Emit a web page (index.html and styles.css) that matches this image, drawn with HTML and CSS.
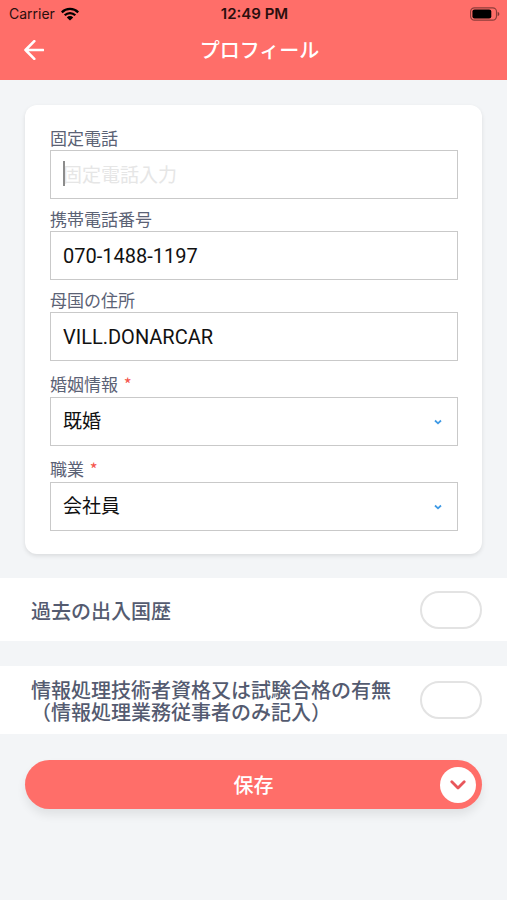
FILE: index.html
```html
<!DOCTYPE html>
<html lang="ja">
<head>
<meta charset="utf-8">
<meta name="viewport" content="width=device-width, initial-scale=1">
<title>プロフィール</title>
<link rel="stylesheet" href="styles.css">
</head>
<body>
<header class="header">
  <div class="status">
    <div class="status-left">
      <span>Carrier</span>
      <svg class="wifi" viewBox="0 0 18 14" aria-hidden="true">
        <path d="M0 4.6A12.7 12.7 0 0 1 18 4.6L16.4 6.2A10.4 10.4 0 0 0 1.6 6.2Z"/>
        <path d="M2.9 7.5A8.6 8.6 0 0 1 15.1 7.5L13.5 9.1A6.4 6.4 0 0 0 4.5 9.1Z"/>
        <path d="M5.8 10.4A4.6 4.6 0 0 1 12.2 10.4L9 13.6Z"/>
      </svg>
    </div>
    <span class="clock">12:49 PM</span>
    <div class="status-right">
      <svg class="battery" viewBox="0 0 31 14" aria-hidden="true">
        <rect x=".6" y=".6" width="26.8" height="12.8" rx="4" fill="none" stroke="#000" stroke-opacity=".45" stroke-width="1.2"/>
        <rect x="2.5" y="2.3" width="19.5" height="9.4" rx="2.2"/>
        <path d="M28.6 4.6Q30.4 5.4 30.4 7T28.6 9.4Z" fill-opacity=".5"/>
      </svg>
    </div>
  </div>
  <nav class="navbar">
    <button class="back" type="button" aria-label="戻る">
      <svg viewBox="0 0 20 20" aria-hidden="true"><path d="M10.3 1.2L1.5 10L10.3 18.8M1.5 10H19.2"/></svg>
    </button>
    <h1 class="title">プロフィール</h1>
  </nav>
</header>
<main>
  <form>
    <section class="card">
      <div class="field">
        <label for="tel">固定電話</label>
        <div class="box"><input id="tel" type="tel" placeholder="固定電話入力"><span class="caret"></span></div>
      </div>
      <div class="field">
        <label for="mobile">携帯電話番号</label>
        <div class="box"><input id="mobile" type="tel" value="070-1488-1197"></div>
      </div>
      <div class="field">
        <label for="address">母国の住所</label>
        <div class="box"><input id="address" type="text" value="VILL.DONARCAR"></div>
      </div>
      <div class="field required">
        <label for="marital">婚姻情報 <span class="mark">*</span></label>
        <div class="box">
          <select id="marital"><option>既婚</option></select>
          <svg class="arrow" viewBox="0 0 8 6" aria-hidden="true"><path d="M1 1.5L4 4.3L7 1.5"/></svg>
        </div>
      </div>
      <div class="field required">
        <label for="job">職業 <span class="mark">*</span></label>
        <div class="box">
          <select id="job"><option>会社員</option></select>
          <svg class="arrow" viewBox="0 0 8 6" aria-hidden="true"><path d="M1 1.5L4 4.3L7 1.5"/></svg>
        </div>
      </div>
    </section>
    <div class="row">
      <label for="history">過去の出入国歴</label>
      <input id="history" class="toggle" type="checkbox">
    </div>
    <div class="row">
      <label for="license">情報処理技術者資格又は試験合格の有無<br>（情報処理業務従事者のみ記入）</label>
      <input id="license" class="toggle" type="checkbox">
    </div>
    <button class="save" type="button">
      <span class="save-text">保存</span>
      <span class="save-icon"><svg viewBox="0 0 16 10" aria-hidden="true"><path d="M1.8 1.8L8 8L14.2 1.8"/></svg></span>
    </button>
  </form>
</main>
</body>
</html>
```
FILE: styles.css
```css
* {
  box-sizing: border-box;
}

body {
  margin: 0;
  min-height: 100vh;
  background: #f3f5f7;
  color: #000;
  font-family: Inter, "Noto Sans CJK JP", sans-serif;
}

input,
select,
button {
  font-family: inherit;
}

.header {
  background: #ff6e69;
}

.status {
  display: grid;
  grid-template-columns: 1fr auto 1fr;
  align-items: center;
  height: 27px;
  padding: 0 7px 0 9px;
  color: #2a0f0e;
  font-size: 14px;
}

.status-left {
  display: flex;
  align-items: center;
  gap: 6px;
}

.status-right {
  display: flex;
  justify-content: flex-end;
}

.wifi {
  width: 18px;
  height: 14px;
  fill: #000;
}

.battery {
  width: 30px;
  height: 14px;
}

.clock {
  font-weight: 600;
  font-size: 15px;
}

.navbar {
  display: grid;
  grid-template-columns: 44px 1fr 32px;
  align-items: center;
  height: 53px;
  padding: 0 12px 7px;
}

.back {
  display: flex;
  align-items: center;
  justify-content: center;
  height: 44px;
  padding: 0;
  border: 0;
  background: none;
}

.back svg {
  width: 20px;
  height: 20px;
  fill: none;
  stroke: #fff;
  stroke-width: 2.6;
  stroke-linecap: round;
  stroke-linejoin: round;
}

.title {
  margin: 0;
  padding-top: 2px;
  color: #fff;
  font-size: 20px;
  font-weight: 500;
  line-height: 24px;
  text-align: center;
}

.card {
  margin: 25px 25px 24px;
  padding: 23px 24px 23px 25px;
  border-radius: 12px;
  background: #fff;
  box-shadow: 0 2px 4px rgba(0, 0, 0, .1);
}

.field + .field {
  margin-top: 10px;
}

.field + .required {
  margin-top: 12px;
}

.field label {
  display: block;
  color: #5b6275;
  font-size: 17px;
  line-height: 22px;
}

.required label {
  line-height: 24px;
}

.field .mark {
  margin-left: 1px;
  color: #f5554c;
  font-family: "Noto Sans CJK JP", sans-serif;
  line-height: 1;
}

.box {
  position: relative;
  display: flex;
  height: 49px;
}

.box input,
.box select {
  width: 100%;
  padding: 0 12px;
  border: 1px solid #c9c9c9;
  border-radius: 0;
  outline: 0;
  background: #fff;
  color: #111;
  font-size: 19px;
  appearance: none;
}

.box input {
  font-family: Roboto, "Noto Sans CJK JP", sans-serif;
  font-size: 20px;
}

.box input::placeholder {
  color: #e6e6e6;
  font-size: 19px;
  opacity: 1;
}

.caret {
  position: absolute;
  top: 11px;
  left: 13px;
  width: 2px;
  height: 25px;
  background: #8c8c8c;
}

.arrow {
  position: absolute;
  top: 22px;
  right: 16px;
  width: 8px;
  height: 6px;
  fill: none;
  stroke: #3f9ae5;
  stroke-width: 1.8;
  pointer-events: none;
}

.row {
  display: flex;
  align-items: center;
  justify-content: space-between;
  min-height: 63px;
  margin-bottom: 25px;
  padding: 10px 25px 10px 31px;
  background: #fff;
}

.row label {
  padding-top: 4px;
  color: #545b70;
  font-size: 20px;
  font-weight: 500;
  line-height: 22px;
}

.toggle {
  flex: none;
  width: 62px;
  height: 38px;
  margin: 0;
  border: 2px solid #e3e3e3;
  border-radius: 19px;
  background: #fff;
  appearance: none;
}

.save {
  display: grid;
  grid-template-columns: 36px 1fr 36px;
  align-items: center;
  width: calc(100% - 50px);
  height: 49px;
  margin: 26px 25px;
  padding: 0 6px;
  border: 0;
  border-radius: 25px;
  background: #ff6e69;
  box-shadow: 0 6px 10px rgba(0, 0, 0, .08);
}

.save-text {
  grid-column: 2;
  color: #fff;
  font-size: 20px;
  font-weight: 500;
}

.save-icon {
  display: flex;
  align-items: center;
  justify-content: center;
  height: 36px;
  border-radius: 50%;
  background: #fff;
}

.save-icon svg {
  width: 16px;
  height: 10px;
  fill: none;
  stroke: #e8565b;
  stroke-width: 2.8;
  stroke-linecap: round;
  stroke-linejoin: round;
}
```
